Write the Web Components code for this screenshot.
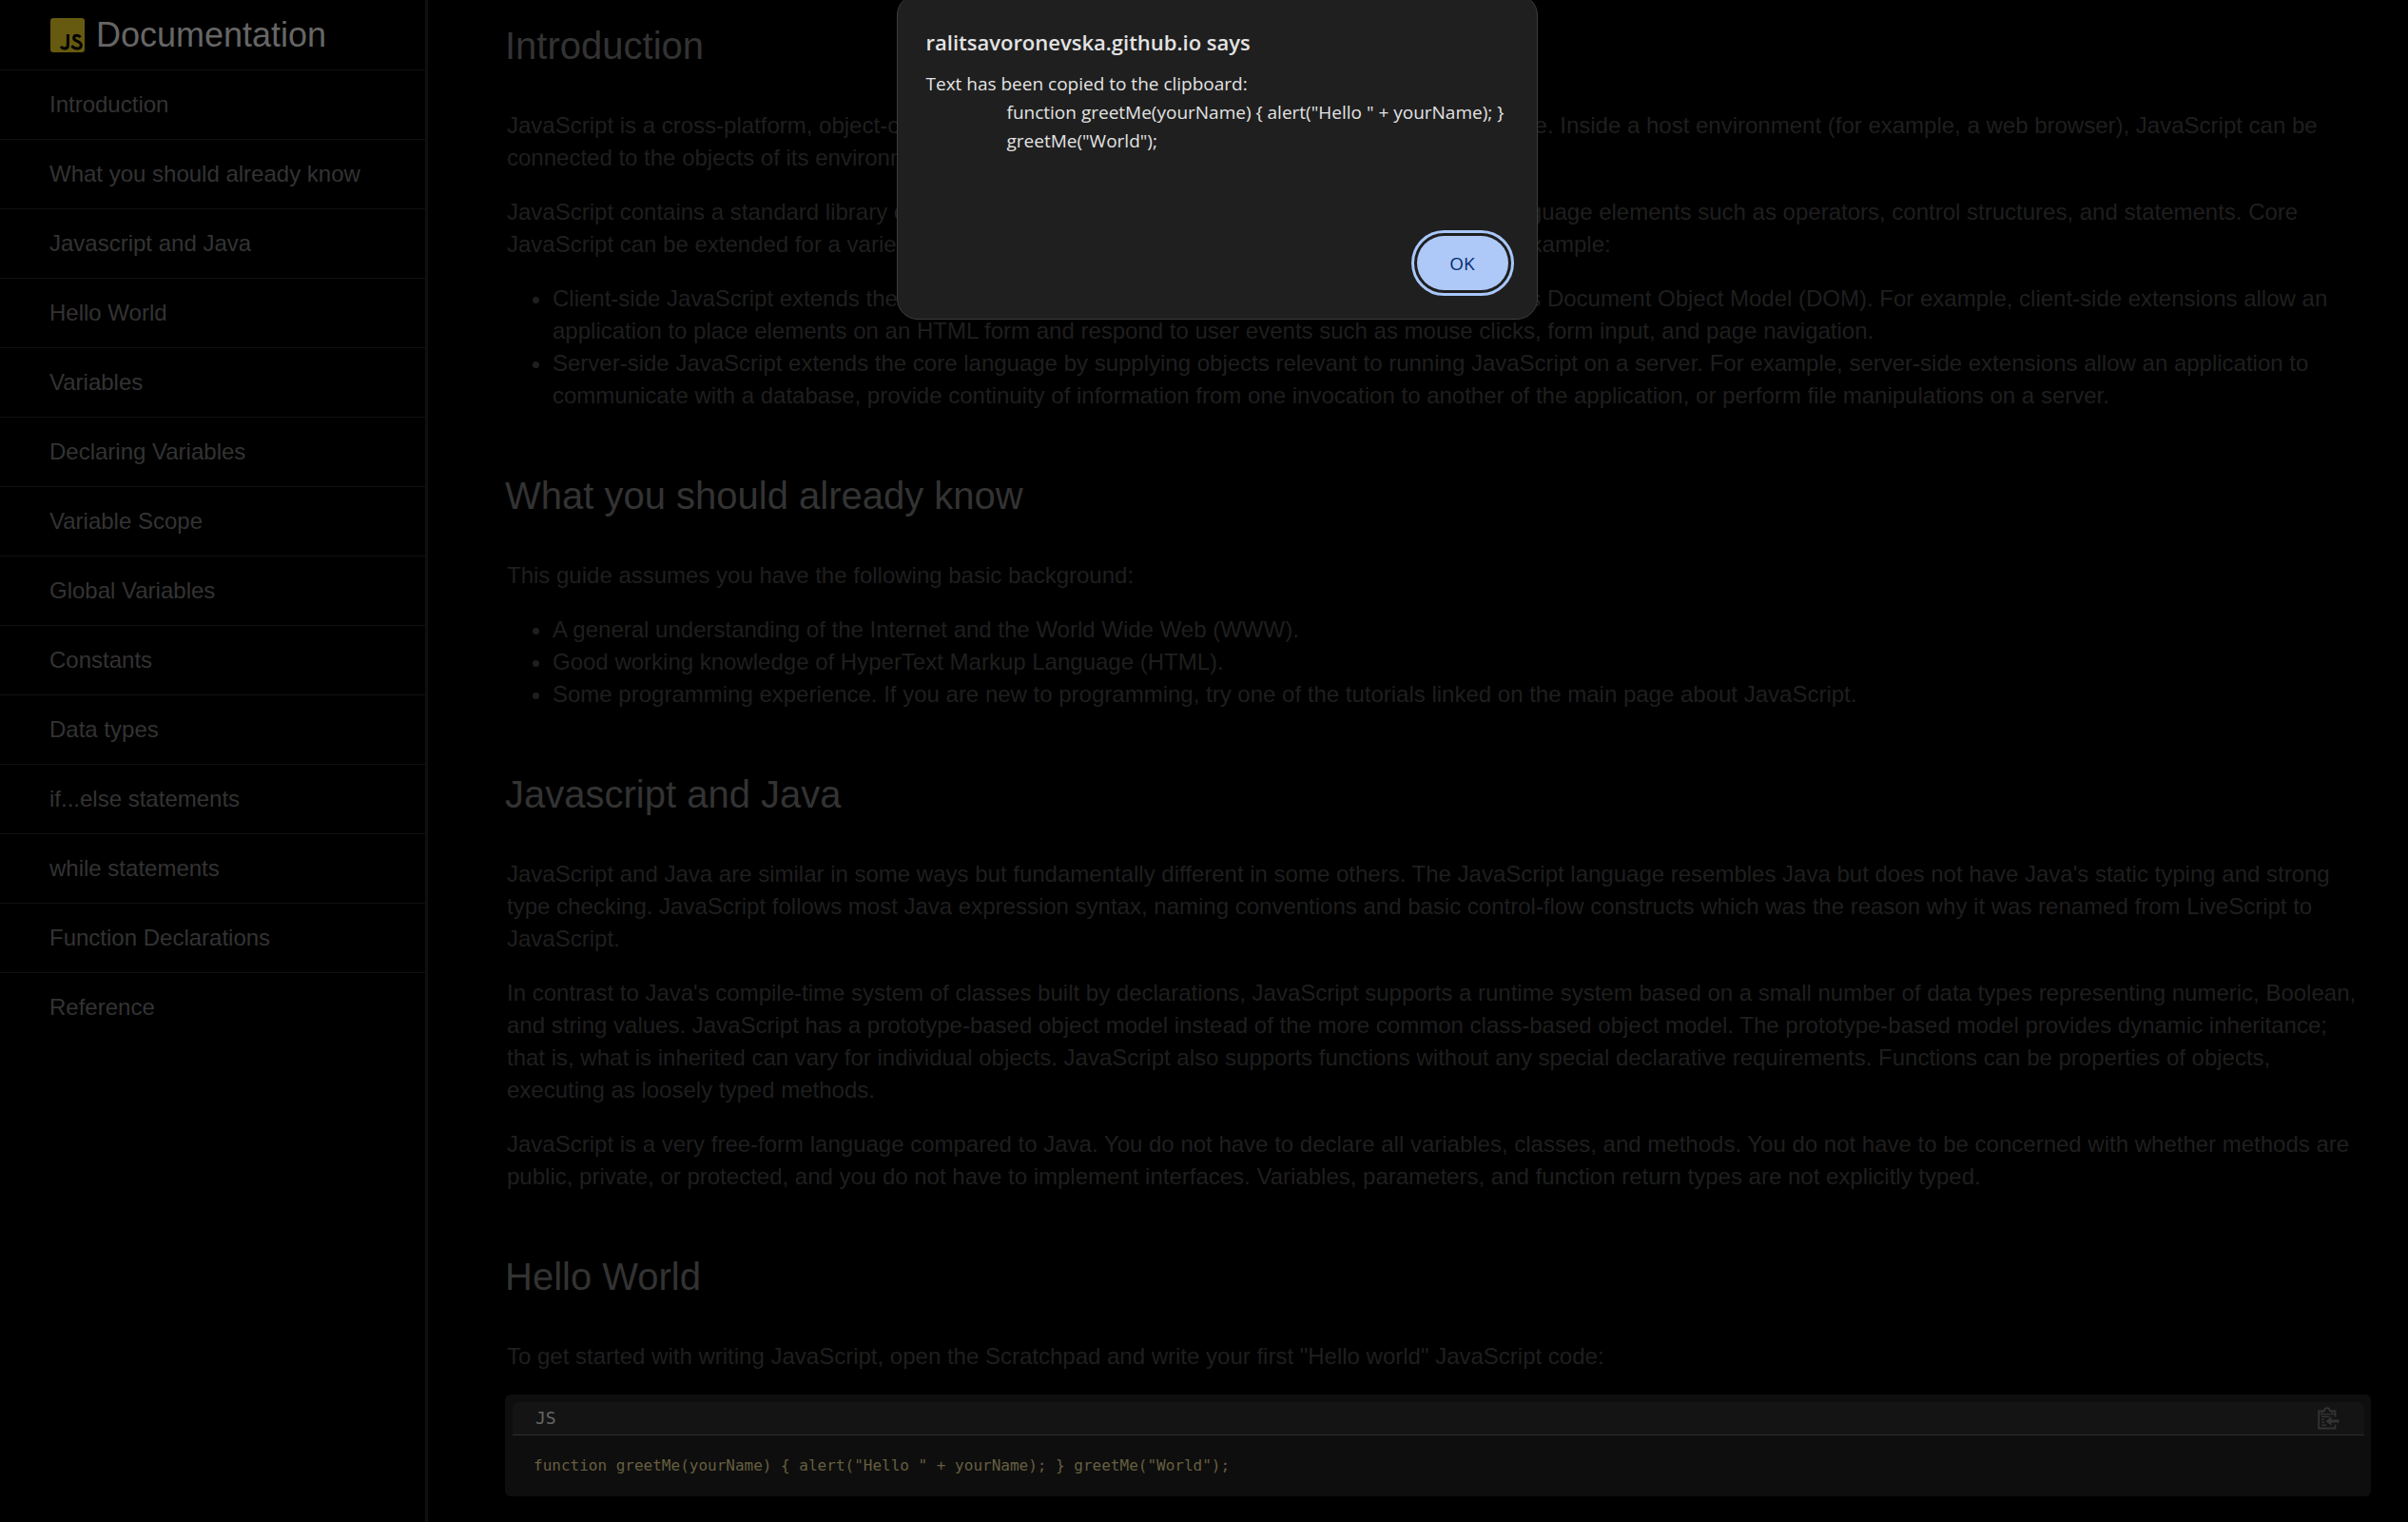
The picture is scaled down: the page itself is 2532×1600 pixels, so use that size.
<!DOCTYPE html>
<html lang="en">
<head>
<meta charset="utf-8">
<title>JavaScript Documentation</title>
<style>
html{background:#000}
body{margin:0;background:#000;color:#333;font-family:"Liberation Sans",Arial,sans-serif;font-size:24px}
</style>
</head>
<body>
<doc-page>
  <doc-nav slot="nav">
    <a href="#introduction">Introduction</a>
    <a href="#know">What you should already know</a>
    <a href="#java">Javascript and Java</a>
    <a href="#hello">Hello World</a>
    <a href="#variables">Variables</a>
    <a href="#declaring">Declaring Variables</a>
    <a href="#scope">Variable Scope</a>
    <a href="#globals">Global Variables</a>
    <a href="#constants">Constants</a>
    <a href="#types">Data types</a>
    <a href="#ifelse">if...else statements</a>
    <a href="#while">while statements</a>
    <a href="#functions">Function Declarations</a>
    <a href="#reference">Reference</a>
  </doc-nav>
  <doc-section id="introduction" heading="Introduction">
    <p>JavaScript is a cross-platform, object-oriented scripting language. It is a small and lightweight language. Inside a host environment (for example, a web browser), JavaScript can be connected to the objects of its environment to provide programmatic control over them.</p>
    <p>JavaScript contains a standard library of objects, such as Array, Date, and Math, and a core set of language elements such as operators, control structures, and statements. Core JavaScript can be extended for a variety of purposes by supplementing it with additional objects; for example:</p>
    <ul>
      <li>Client-side JavaScript extends the core language by supplying objects to control a browser and its Document Object Model (DOM). For example, client-side extensions allow an application to place elements on an HTML form and respond to user events such as mouse clicks, form input, and page navigation.</li>
      <li>Server-side JavaScript extends the core language by supplying objects relevant to running JavaScript on a server. For example, server-side extensions allow an application to communicate with a database, provide continuity of information from one invocation to another of the application, or perform file manipulations on a server.</li>
    </ul>
  </doc-section>
  <doc-section id="know" heading="What you should already know">
    <p>This guide assumes you have the following basic background:</p>
    <ul>
      <li>A general understanding of the Internet and the World Wide Web (WWW).</li>
      <li>Good working knowledge of HyperText Markup Language (HTML).</li>
      <li>Some programming experience. If you are new to programming, try one of the tutorials linked on the main page about JavaScript.</li>
    </ul>
  </doc-section>
  <doc-section id="java" heading="Javascript and Java">
    <p>JavaScript and Java are similar in some ways but fundamentally different in some others. The JavaScript language resembles Java but does not have Java's static typing and strong type checking. JavaScript follows most Java expression syntax, naming conventions and basic control-flow constructs which was the reason why it was renamed from LiveScript to JavaScript.</p>
    <p>In contrast to Java's compile-time system of classes built by declarations, JavaScript supports a runtime system based on a small number of data types representing numeric, Boolean, and string values. JavaScript has a prototype-based object model instead of the more common class-based object model. The prototype-based model provides dynamic inheritance; that is, what is inherited can vary for individual objects. JavaScript also supports functions without any special declarative requirements. Functions can be properties of objects, executing as loosely typed methods.</p>
    <p>JavaScript is a very free-form language compared to Java. You do not have to declare all variables, classes, and methods. You do not have to be concerned with whether methods are public, private, or protected, and you do not have to implement interfaces. Variables, parameters, and function return types are not explicitly typed.</p>
  </doc-section>
  <doc-section id="hello" heading="Hello World">
    <p>To get started with writing JavaScript, open the Scratchpad and write your first "Hello world" JavaScript code:</p>
    <code-block lang="JS">function greetMe(yourName) { alert("Hello " + yourName); } greetMe("World");</code-block>
  </doc-section>
</doc-page>
<alert-box origin="ralitsavoronevska.github.io says">Text has been copied to the clipboard:
<span>function greetMe(yourName) { alert("Hello " + yourName); }
greetMe("World");</span></alert-box>

<script>
const define = (name, html, setup) => {
  const template = document.createElement('template');
  template.innerHTML = html;
  customElements.define(name, class extends HTMLElement {
    constructor() {
      super();
      this.attachShadow({ mode: 'open' }).append(template.content.cloneNode(true));
    }
    connectedCallback() { if (setup) setup(this, this.shadowRoot); }
  });
};

define('js-logo', `
<style>
:host{display:block;width:36px;height:36px}
svg{display:block;width:100%;height:100%}
</style>
<svg viewBox="0 0 36 36" aria-hidden="true">
  <rect width="36" height="36" rx="3" fill="#665a10"/>
  <g fill="none" stroke="#000" stroke-width="3">
    <path d="M18.4 17V28.2C18.4 31.2 16.9 32 15 32C13.2 32 12 31.2 11 29.8"/>
    <path d="M31.6 20.2C30.6 18.8 29.5 18.3 27.9 18.3C26 18.3 24.7 19.3 24.7 20.9C24.7 22.7 26 23.4 28.3 24.4C31 25.5 32.3 26.5 32.3 28.5C32.3 30.8 30.6 32 28 32C25.4 32 23.6 30.9 22.6 29"/>
  </g>
</svg>`);

define('doc-nav', `
<style>
:host{display:block}
header{display:flex;align-items:center;gap:12px;height:73px;padding-left:53px;border-bottom:1px solid #111;color:#666;font-size:36px}
nav{display:flex;flex-direction:column}
::slotted(a){display:block;padding-left:52px;line-height:72px;color:#333;text-decoration:none;border-bottom:1px solid #111}
::slotted(a:last-child){border-bottom:0}
</style>
<header><js-logo></js-logo><span>Documentation</span></header>
<nav aria-label="Documentation"><slot></slot></nav>`);

define('doc-page', `
<style>
:host{display:flex;height:100vh;overflow:hidden}
aside{flex:none;width:447px;border-right:3px solid #0f0f0f}
main{flex:1;min-width:0;padding:24px 39px 24px 81px;display:flex;flex-direction:column;gap:64px}
</style>
<aside><slot name="nav"></slot></aside>
<main><slot></slot></main>`);

define('doc-section', `
<style>
:host{display:block}
h2{margin:0 0 43px;font-weight:400;font-size:40px;line-height:48px;color:#333}
.body{display:flex;flex-direction:column;gap:23px;line-height:34px;color:#1f1f1f}
::slotted(p){margin:0;padding:0 10px 0 2px}
::slotted(ul){margin:0;padding:0 10px 0 50px}
</style>
<h2></h2>
<div class="body"><slot></slot></div>`, (el, root) => {
  root.querySelector('h2').textContent = el.getAttribute('heading');
});

define('code-block', `
<style>
:host{display:block;background:#0e0e0e;border-radius:6px;padding:8px 7px 0 8px;font-family:"DejaVu Sans Mono","Liberation Mono",monospace}
.bar{display:flex;align-items:center;justify-content:space-between;height:34px;padding:0 26px 0 24px;background:#141414;border-bottom:1px solid #2e2e2e;border-radius:6px 6px 0 0;font-size:18px;color:#666}
button{display:block;width:23px;height:24px;padding:0;border:0;background:none;color:#333}
svg{display:block;width:23px;height:24px}
pre{margin:0;padding:20px 22px;font:inherit;font-size:16px;line-height:24px;color:#665f40}
code{font:inherit}
</style>
<div class="bar"><span></span>
<button type="button" aria-label="Copy to clipboard"><svg viewBox="0 0 23 24" fill="none" stroke="currentColor" stroke-width="1.8">
<path d="M18.5 10.5V4.5H15M18.5 18.5V22.5H1.2V4.5H5"/>
<path d="M2 7.6H18" stroke-width="1.2"/>
<path d="M5 6.6V4.4H7Q7.3 1.2 9.9 1.2T12.9 4.4H15V6.6"/>
<path d="M4 10.3H12.5M4 13.3H7M4 16.3H7M4 19.3H9" stroke-width="1.5"/>
<path d="M22.5 15H13" stroke-width="3"/><path d="M8.5 15L14.5 10V20Z" fill="currentColor" stroke="none"/>
</svg></button></div>
<pre><code><slot></slot></code></pre>`, (el, root) => {
  root.querySelector('span').textContent = el.getAttribute('lang');
});

define('alert-box', `
<style>
:host{position:absolute;top:-6px;left:0;right:0;display:flex;justify-content:center;font-family:"Open Sans","Noto Sans",sans-serif;color:#e3e3e3}
section{box-sizing:border-box;width:674px;height:342px;margin-left:27px;padding:31px 24px 30px 30px;border:1px solid #3c3c3c;border-radius:22px;background:#1f1f1f;display:flex;flex-direction:column}
h1{margin:0;font-size:22px;line-height:36px;font-weight:600}
p{margin:11px 0 0;font-size:19px;line-height:30px;white-space:pre-wrap}
::slotted(span){display:block;padding-left:85px}
button{margin:auto 6px 0 auto;flex:none;width:96px;height:57px;border:0;border-radius:29px;background:#aec9f8;color:#062e6f;font:500 19px/24px "Open Sans","Noto Sans",sans-serif;outline:3px solid #a8c7fa;outline-offset:3px}
</style>
<section role="alertdialog" aria-labelledby="t">
<h1 id="t"></h1><p><slot></slot></p><button type="button">OK</button>
</section>`, (el, root) => {
  root.querySelector('h1').textContent = el.getAttribute('origin');
});
</script>
</body>
</html>
